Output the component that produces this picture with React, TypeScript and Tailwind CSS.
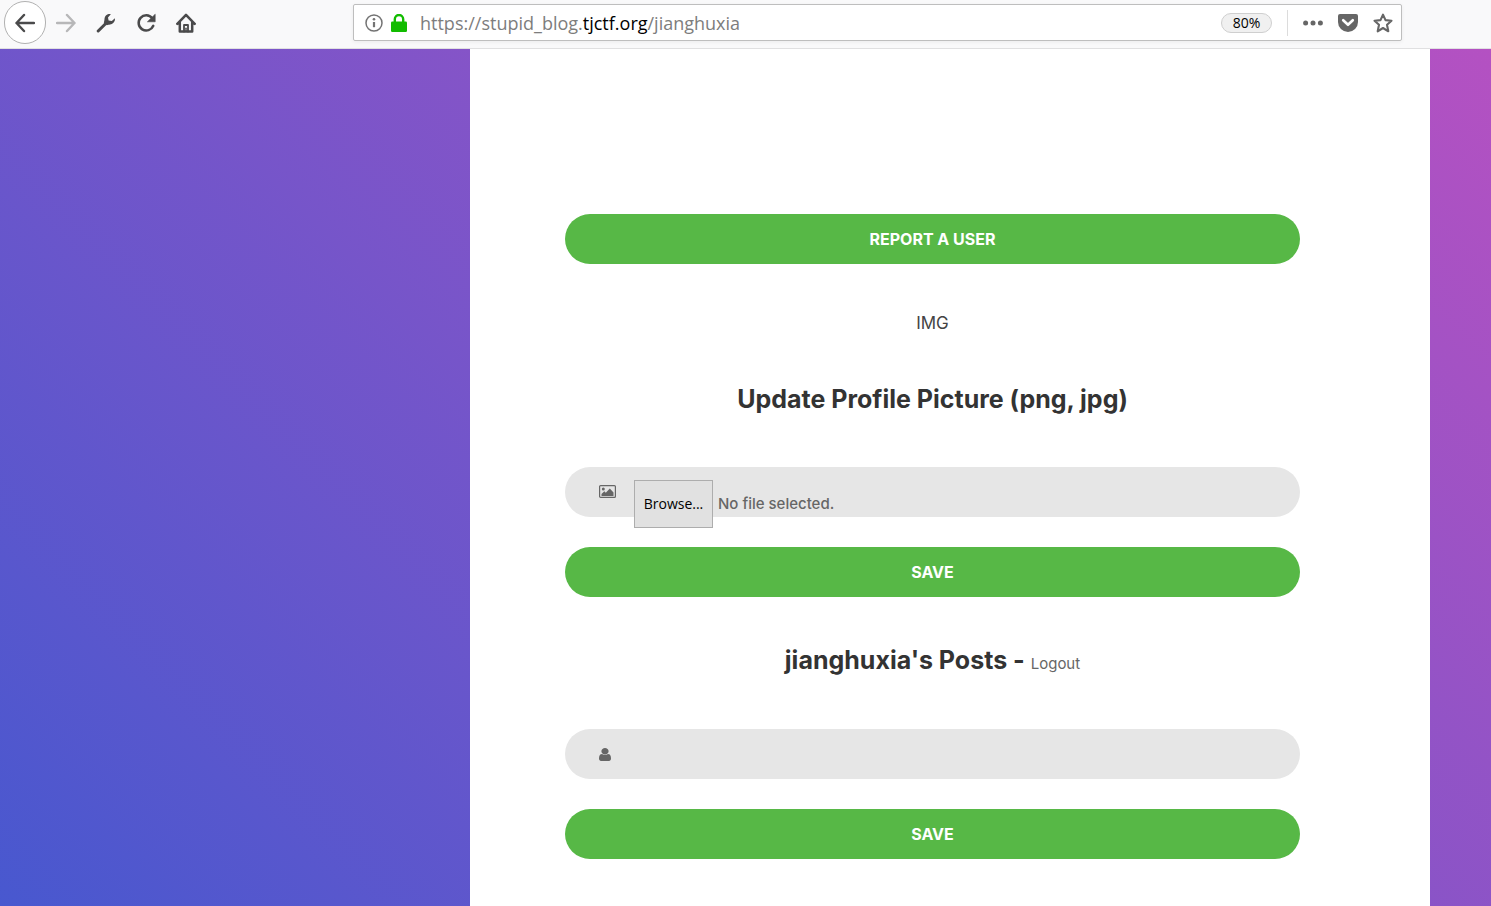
import React from "react";

const iconButton = "flex h-10 w-10 shrink-0 items-center justify-center text-[#4a4a4b]";
const greenButton =
  "flex h-[50px] w-full items-center justify-center rounded-full bg-[#57b846] text-base leading-6 font-bold text-white uppercase";
const heading = "text-center text-[25px] leading-10 font-bold text-[#333333]";

function Toolbar() {
  return (
    <header className="flex h-[49px] shrink-0 items-start border-b border-[#e0e0e1] bg-[#f9f9fa] pr-[89px]">
      <nav aria-label="Browser" className="flex w-[353px] shrink-0 items-center pt-px pl-1">
        <button
          type="button"
          aria-label="Back"
          className="flex h-[43px] w-[42px] shrink-0 items-center justify-center rounded-full border border-[#b1b1b1] bg-white text-[#4a4a4b]"
        >
          <svg width="20" height="20" viewBox="0 0 20 20" fill="none" stroke="currentColor" strokeWidth="2.4" strokeLinecap="round" strokeLinejoin="round">
            <path d="M19 10H1.5M9 2L1.5 10L9 18" />
          </svg>
        </button>
        <button type="button" aria-label="Forward" className="flex h-10 w-10 shrink-0 items-center justify-center text-[#b7b7b8]">
          <svg width="20" height="20" viewBox="0 0 20 20" fill="none" stroke="currentColor" strokeWidth="2.4" strokeLinecap="round" strokeLinejoin="round">
            <path d="M1 10H18.5M11 2L18.5 10L11 18" />
          </svg>
        </button>
        <button type="button" aria-label="Developer tools" className={iconButton}>
          <svg width="20" height="20" viewBox="0 0 20 20">
            <path d="M2.2 18L10.5 9.8" fill="none" stroke="currentColor" strokeWidth="3" strokeLinecap="round" />
            <path
              d="M14.8 1.2C12 .5 8.6 2.6 8.5 6C8.4 7.6 8.2 8.6 7.8 9.4L10.8 12.2C11.8 11.6 12.8 11.7 14 11.4C17.4 10.8 19.4 8.2 18.9 5.2L15.8 8L12.6 7.6L12 4.4Z"
              fill="currentColor"
            />
          </svg>
        </button>
        <button type="button" aria-label="Reload" className={iconButton}>
          <svg width="20" height="20" viewBox="0 0 20 20">
            <path d="M16.2 5.2A7.6 7.6 0 1 0 17.3 12.8" fill="none" stroke="currentColor" strokeWidth="2.5" strokeLinecap="round" />
            <path d="M19.2 1.2V8.8H11.4Z" fill="currentColor" stroke="currentColor" strokeWidth=".6" strokeLinejoin="round" />
          </svg>
        </button>
        <button type="button" aria-label="Home" className={iconButton}>
          <svg width="20" height="20" viewBox="0 0 20 20" fill="none" stroke="currentColor" strokeWidth="2.5" strokeLinecap="round" strokeLinejoin="round">
            <path d="M1.3 10.8L10 1.8L18.7 10.8M3.8 9.5V18.6H16.2V9.5" />
            <path d="M8 18.5V12H12V18.5" strokeWidth="1.8" />
            <path d="M10 15.2V18" strokeWidth="1.4" />
          </svg>
        </button>
      </nav>

      <div className="mt-1 flex h-[37px] min-w-0 flex-1 items-center rounded-xs border border-[#bebebe] bg-white pr-2 pl-[11px] shadow-[0_1px_4px_rgba(0,0,0,0.06)]">
        <svg className="shrink-0" width="18" height="18" viewBox="0 0 18 18" fill="none" stroke="#737373">
          <circle cx="9" cy="9" r="8" strokeWidth="1.5" />
          <path d="M9 8V13.2" strokeWidth="2.2" />
          <circle cx="9" cy="5.2" r="1.3" fill="#737373" stroke="none" />
        </svg>
        <svg className="ml-2 shrink-0" width="16" height="18" viewBox="0 0 16 18">
          <path d="M3.8 9V5.2A4.2 4.2 0 0 1 12.2 5.2V9" fill="none" stroke="#12bc00" strokeWidth="2.4" />
          <rect x="0" y="7.5" width="16" height="10.5" rx="1.2" fill="#12bc00" />
        </svg>
        <p className="ml-[13px] min-w-0 flex-1 truncate font-['Open_Sans','Noto_Sans',sans-serif] text-lg leading-7 text-[#7d7d7d]">
          https://stupid_blog.<span className="text-black">tjctf.org</span>/jianghuxia
        </p>
        <button
          type="button"
          className="flex h-5 w-[51px] shrink-0 items-center justify-center rounded-full border border-[#cfcfcf] bg-[#f0f0f0] font-['Open_Sans','Noto_Sans',sans-serif] text-sm text-black"
        >
          80%
        </button>
        <span className="ml-[15px] h-[26px] w-px shrink-0 bg-[#dcdcdc]" />
        <button type="button" aria-label="Page actions" className="ml-[15px] shrink-0 text-[#666666]">
          <svg width="20" height="6" viewBox="0 0 20 6" fill="currentColor">
            <circle cx="2.6" cy="3" r="2.5" />
            <circle cx="10" cy="3" r="2.5" />
            <circle cx="17.4" cy="3" r="2.5" />
          </svg>
        </button>
        <button type="button" aria-label="Save to Pocket" className="ml-[15px] shrink-0 text-[#666666]">
          <svg width="20" height="18" viewBox="0 0 20 18">
            <path d="M2 0H18Q20 0 20 2V8A10 10 0 0 1 0 8V2Q0 0 2 0Z" fill="currentColor" />
            <path d="M5.2 6.2L10 10.8L14.8 6.2" fill="none" stroke="white" strokeWidth="2.6" strokeLinecap="round" strokeLinejoin="round" />
          </svg>
        </button>
        <button type="button" aria-label="Bookmark" className="ml-[15px] shrink-0 text-[#666666]">
          <svg width="20" height="20" viewBox="0 0 20 20" fill="none" stroke="currentColor" strokeWidth="2.1" strokeLinejoin="round">
            <path d="M10 1.6L12.5 7.1L18.5 7.7L14 11.8L15.3 18.3L10 15L4.7 18.3L6 11.8L1.5 7.7L7.5 7.1Z" />
          </svg>
        </button>
      </div>
    </header>
  );
}

export default function App() {
  return (
    <div className="flex min-h-screen flex-col font-['Inter','Open_Sans',sans-serif]">
      <Toolbar />
      <div className="flex flex-1 bg-[linear-gradient(45deg,#4858cf,#b451c2)] pr-[61px] pl-[470px]">
        <main className="min-w-0 flex-1 bg-white pt-[165px] pr-[130px] pb-[47px] pl-[95px]">
          <button type="button" className={greenButton}>
            Report a user
          </button>
          <p className="mt-[47px] text-center text-[17px] leading-6 text-[#444444]">IMG</p>

          <form onSubmit={(e) => e.preventDefault()}>
            <h2 className={`${heading} mt-11`}>Update Profile Picture (png, jpg)</h2>
            <div className="mt-12 flex h-[50px] items-start rounded-full bg-[#e6e6e6] pl-[34px]">
              <svg className="mt-[18px] shrink-0" width="17" height="13" viewBox="0 0 17 13">
                <rect x=".6" y=".6" width="15.8" height="11.8" rx="1" fill="none" stroke="#666666" strokeWidth="1.2" />
                <circle cx="4.3" cy="4" r="1.5" fill="#666666" />
                <path d="M2.5 11V9L5.3 6.3L6.8 7.8L10.8 3.6L14.5 7.4V11Z" fill="#666666" />
              </svg>
              <input id="picture" type="file" accept=".png,.jpg" className="peer sr-only" />
              <label htmlFor="picture" className="mt-[13px] ml-[18px] flex items-center text-[15px] leading-6 font-medium text-[#666666]">
                <span className="mr-[5px] flex h-12 w-[79px] items-center justify-center border border-[#adadad] bg-[#e1e1e1] font-['Open_Sans','Noto_Sans',sans-serif] text-sm font-normal text-black">
                  Browse...
                </span>
                No file selected.
              </label>
            </div>
            <button type="submit" className={`${greenButton} mt-[30px]`}>
              Save
            </button>
          </form>

          <form onSubmit={(e) => e.preventDefault()}>
            <h2 className={`${heading} mt-[43px]`}>
              jianghuxia's Posts -{" "}
              <a href="#logout" className="text-[15px] leading-6 font-normal text-[#666666]">
                Logout
              </a>
            </h2>
            <div className="mt-[49px] flex h-[50px] items-center rounded-full bg-[#e6e6e6] pr-[30px] pl-[34px]">
              <label htmlFor="post" aria-label="New post" className="shrink-0">
                <svg width="12" height="13" viewBox="0 128 1280 1536" preserveAspectRatio="none" fill="#666666" className="block">
                  <path d="M1280 1399q0 109-62.5 187t-150.5 78h-854q-88 0-150.5-78t-62.5-187q0-85 8.5-160.5t31.5-152 58.5-131 94-89 134.5-34.5q131 128 313 128t313-128q76 0 134.5 34.5t94 89 58.5 131 31.5 152 8.5 160.5zM1024 512q0 159-112.5 271.5t-271.5 112.5-271.5-112.5-112.5-271.5 112.5-271.5 271.5-112.5 271.5 112.5 112.5 271.5z" />
                </svg>
              </label>
              <input
                id="post"
                type="text"
                className="ml-[22px] h-full min-w-0 flex-1 bg-transparent text-[15px] font-medium text-[#666666] outline-none"
              />
            </div>
            <button type="submit" className={`${greenButton} mt-[30px]`}>
              Save
            </button>
          </form>
        </main>
      </div>
    </div>
  );
}
